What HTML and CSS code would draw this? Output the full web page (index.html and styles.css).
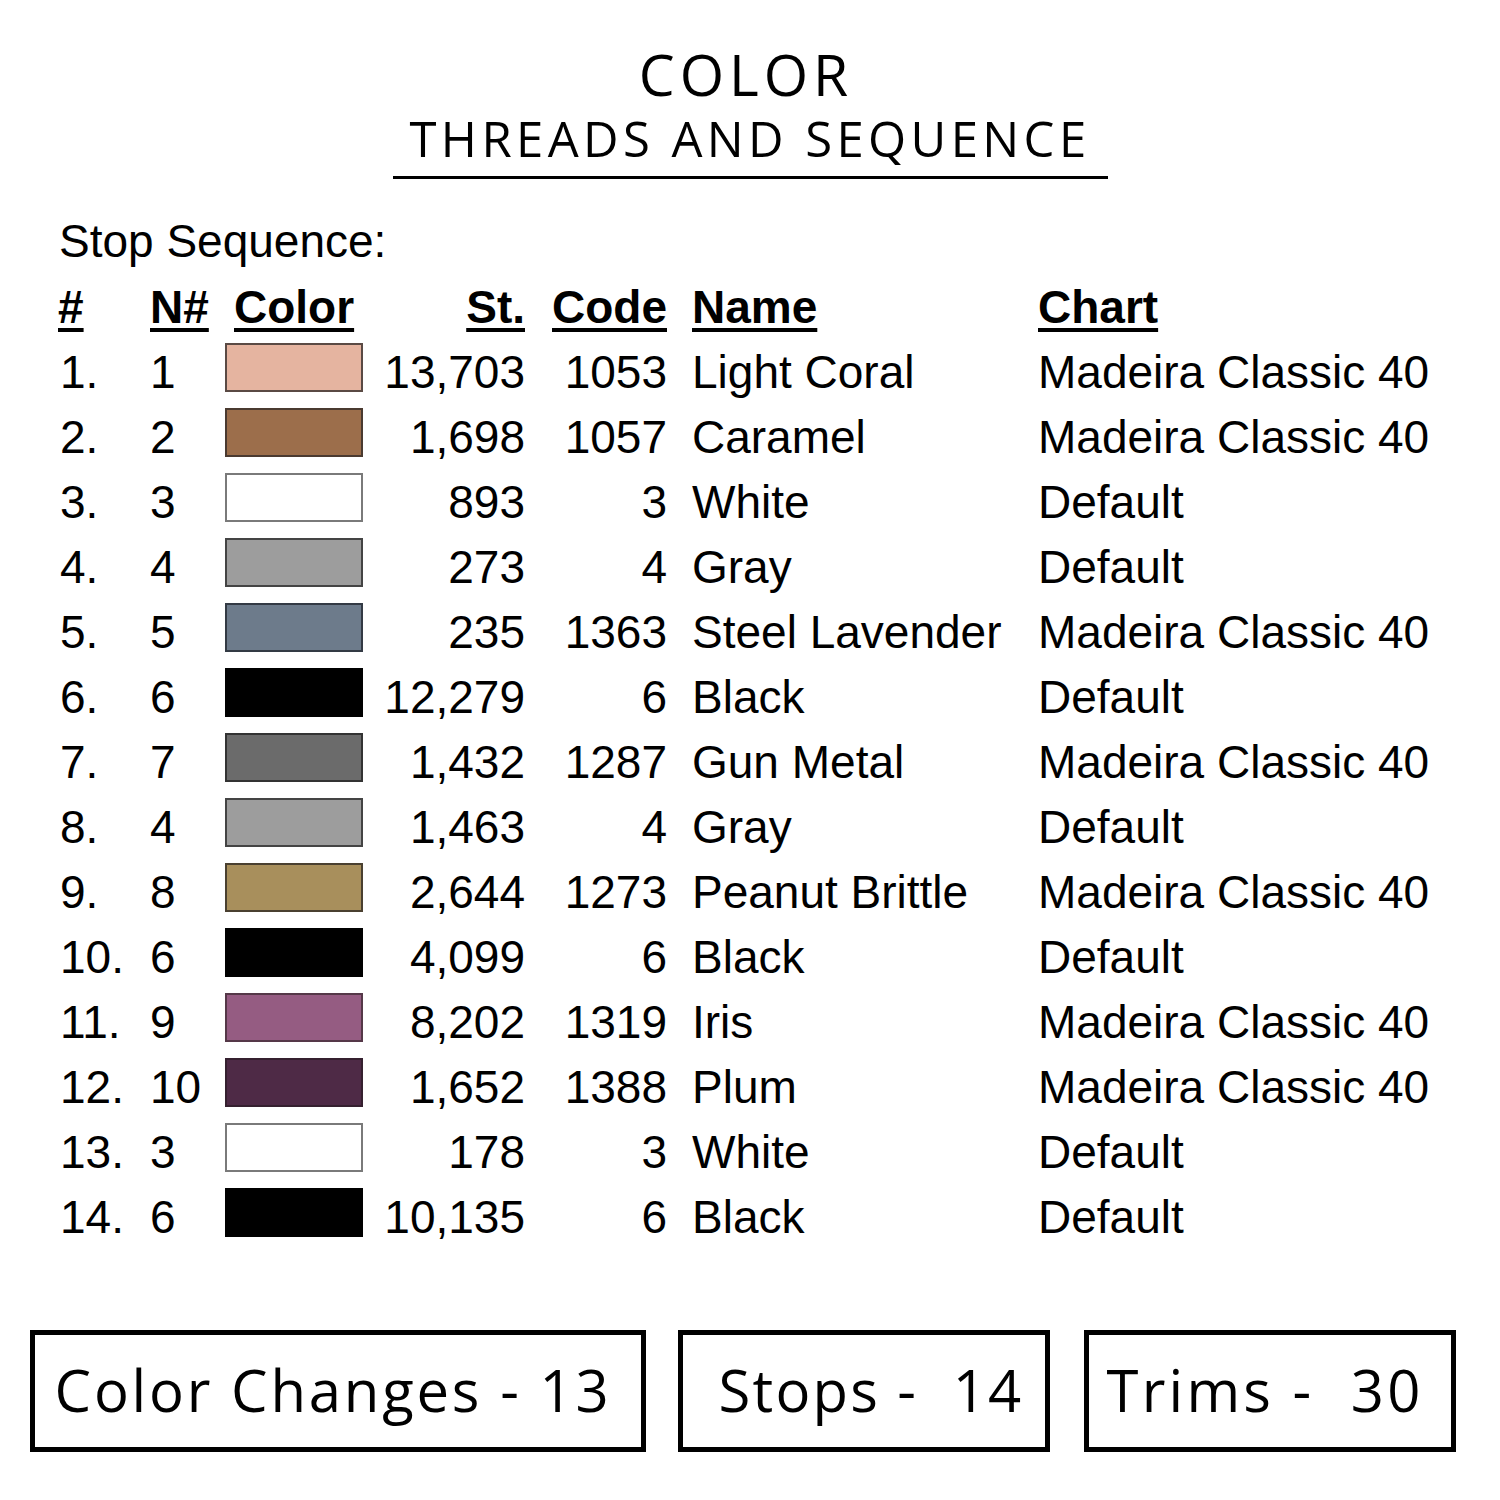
FILE: index.html
```html
<!DOCTYPE html>
<html>
<head>
<meta charset="utf-8">
<link rel="stylesheet" href="styles.css">
</head>
<body>
<div class="page">
  <header class="heading">
    <div class="title">COLOR</div>
    <div class="subtitle">THREADS AND SEQUENCE</div>
  </header>

  <section class="sequence">
    <div class="seq-label">Stop Sequence:</div>
    <div class="table">
      <div class="th c-num">#</div>
      <div class="th c-n">N#</div>
      <div class="th c-color">Color</div>
      <div class="th c-st">St.</div>
      <div class="th c-code">Code</div>
      <div class="th c-name">Name</div>
      <div class="th c-chart">Chart</div>

      <div class="td c-num">1.</div><div class="td c-n">1</div><div class="td c-color"><span class="swatch sw-coral"></span></div><div class="td c-st">13,703</div><div class="td c-code">1053</div><div class="td c-name">Light Coral</div><div class="td c-chart">Madeira Classic 40</div>
      <div class="td c-num">2.</div><div class="td c-n">2</div><div class="td c-color"><span class="swatch sw-caramel"></span></div><div class="td c-st">1,698</div><div class="td c-code">1057</div><div class="td c-name">Caramel</div><div class="td c-chart">Madeira Classic 40</div>
      <div class="td c-num">3.</div><div class="td c-n">3</div><div class="td c-color"><span class="swatch sw-white"></span></div><div class="td c-st">893</div><div class="td c-code">3</div><div class="td c-name">White</div><div class="td c-chart">Default</div>
      <div class="td c-num">4.</div><div class="td c-n">4</div><div class="td c-color"><span class="swatch sw-gray"></span></div><div class="td c-st">273</div><div class="td c-code">4</div><div class="td c-name">Gray</div><div class="td c-chart">Default</div>
      <div class="td c-num">5.</div><div class="td c-n">5</div><div class="td c-color"><span class="swatch sw-steel"></span></div><div class="td c-st">235</div><div class="td c-code">1363</div><div class="td c-name">Steel Lavender</div><div class="td c-chart">Madeira Classic 40</div>
      <div class="td c-num">6.</div><div class="td c-n">6</div><div class="td c-color"><span class="swatch sw-black"></span></div><div class="td c-st">12,279</div><div class="td c-code">6</div><div class="td c-name">Black</div><div class="td c-chart">Default</div>
      <div class="td c-num">7.</div><div class="td c-n">7</div><div class="td c-color"><span class="swatch sw-gun"></span></div><div class="td c-st">1,432</div><div class="td c-code">1287</div><div class="td c-name">Gun Metal</div><div class="td c-chart">Madeira Classic 40</div>
      <div class="td c-num">8.</div><div class="td c-n">4</div><div class="td c-color"><span class="swatch sw-gray"></span></div><div class="td c-st">1,463</div><div class="td c-code">4</div><div class="td c-name">Gray</div><div class="td c-chart">Default</div>
      <div class="td c-num">9.</div><div class="td c-n">8</div><div class="td c-color"><span class="swatch sw-peanut"></span></div><div class="td c-st">2,644</div><div class="td c-code">1273</div><div class="td c-name">Peanut Brittle</div><div class="td c-chart">Madeira Classic 40</div>
      <div class="td c-num">10.</div><div class="td c-n">6</div><div class="td c-color"><span class="swatch sw-black"></span></div><div class="td c-st">4,099</div><div class="td c-code">6</div><div class="td c-name">Black</div><div class="td c-chart">Default</div>
      <div class="td c-num">11.</div><div class="td c-n">9</div><div class="td c-color"><span class="swatch sw-iris"></span></div><div class="td c-st">8,202</div><div class="td c-code">1319</div><div class="td c-name">Iris</div><div class="td c-chart">Madeira Classic 40</div>
      <div class="td c-num">12.</div><div class="td c-n">10</div><div class="td c-color"><span class="swatch sw-plum"></span></div><div class="td c-st">1,652</div><div class="td c-code">1388</div><div class="td c-name">Plum</div><div class="td c-chart">Madeira Classic 40</div>
      <div class="td c-num">13.</div><div class="td c-n">3</div><div class="td c-color"><span class="swatch sw-white"></span></div><div class="td c-st">178</div><div class="td c-code">3</div><div class="td c-name">White</div><div class="td c-chart">Default</div>
      <div class="td c-num">14.</div><div class="td c-n">6</div><div class="td c-color"><span class="swatch sw-black"></span></div><div class="td c-st">10,135</div><div class="td c-code">6</div><div class="td c-name">Black</div><div class="td c-chart">Default</div>
    </div>
  </section>

  <footer class="stats">
    <div class="stat stat-wide">Color Changes - 13</div>
    <div class="stat stat-stops">Stops -&nbsp; 14</div>
    <div class="stat stat-trims">Trims -&nbsp; 30</div>
  </footer>
</div>
</body>
</html>
```

FILE: styles.css
```css
html, body {
  margin: 0;
  padding: 0;
  background: #ffffff;
}

.page {
  width: 1500px;
  height: 1500px;
  color: #000;
  font-family: "Liberation Sans", Arial, sans-serif;
}

.heading {
  display: flex;
  flex-direction: column;
  align-items: center;
  padding-top: 42px;
}

.title {
  font-family: "Open Sans", "Noto Sans", sans-serif;
  font-weight: 500;
  font-size: 57px;
  line-height: 64px;
  letter-spacing: 5px;
  margin-left: -8px;
}

.subtitle {
  width: 715px;
  margin-top: 4px;
  text-align: center;
  font-family: "Open Sans", "Noto Sans", sans-serif;
  font-weight: 400;
  font-size: 49px;
  line-height: 56px;
  letter-spacing: 4.4px;
  border-bottom: 3px solid #000;
  padding-bottom: 10px;
}

.sequence {
  padding-left: 58px;
  margin-top: 33px;
}

.seq-label {
  font-size: 46px;
  line-height: 58px;
  margin-left: 1px;
}

.table {
  margin-top: 6px;
  display: grid;
  grid-template-columns: 92px 75px 138px 162px 142px 25px 346px auto;
  grid-template-rows: 64px repeat(14, 65px);
  font-size: 46px;
  line-height: 65px;
}

.th {
  font-weight: bold;
  text-decoration: underline;
  text-decoration-thickness: 4px;
  text-underline-offset: 5px;
  line-height: 62px;
}

.c-num { grid-column: 1; padding-left: 2px; }
.th.c-num { padding-left: 0; }
.c-n { grid-column: 2; }
.c-color { grid-column: 3; }
.th.c-color { padding-left: 9px; }
.c-st { grid-column: 4; text-align: right; }
.c-code { grid-column: 5; text-align: right; }
.c-name { grid-column: 7; white-space: nowrap; }
.c-chart { grid-column: 8; white-space: nowrap; }

.td.c-color {
  display: flex;
  align-items: flex-start;
}

.swatch {
  display: block;
  width: 138px;
  height: 49px;
  margin-top: 3px;
  box-sizing: border-box;
  border: 2px solid #3a3a3a;
}

.sw-coral { background: #e5b4a0; border-color: #5a4a44; }
.sw-caramel { background: #9c6e4b; border-color: #4a3a30; }
.sw-white { background: #ffffff; border-color: #7a7a7a; }
.sw-gray { background: #9d9d9d; border-color: #444; }
.sw-steel { background: #6d7b8b; border-color: #333a44; }
.sw-black { background: #000000; border-color: #000; }
.sw-gun { background: #6b6b6b; border-color: #333; }
.sw-peanut { background: #a88f5c; border-color: #4a4030; }
.sw-iris { background: #955c82; border-color: #553848; }
.sw-plum { background: #4e2a46; border-color: #35202f; }

.stats {
  display: flex;
  padding-left: 30px;
  margin-top: 80px;
  gap: 32px;
}

.stat {
  box-sizing: border-box;
  width: 372px;
  height: 122px;
  border: 5px solid #000;
  display: flex;
  align-items: center;
  justify-content: center;
  padding-bottom: 4px;
  font-family: "Open Sans", "Noto Sans", sans-serif;
  font-weight: 500;
  font-size: 58px;
  letter-spacing: 2.2px;
  white-space: nowrap;
}

.stat-wide {
  width: 616px;
  letter-spacing: 2.8px;
  padding-right: 10px;
}

.stat-stops {
  padding-left: 14px;
}

.stat-trims {
  margin-left: 2px;
  letter-spacing: 3.2px;
  padding-right: 10px;
}
```
